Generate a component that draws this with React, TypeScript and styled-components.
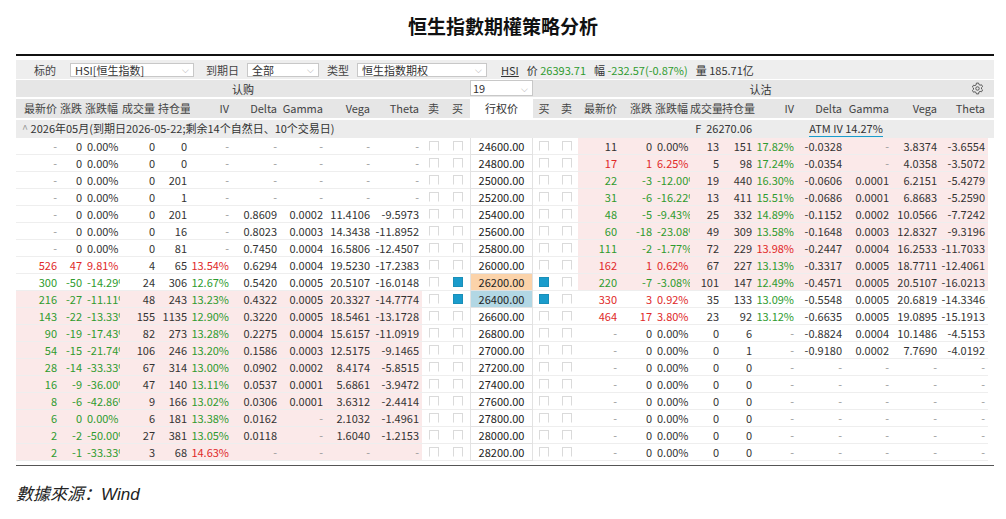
import React from 'react';
import styled, { createGlobalStyle } from 'styled-components';

const Global = createGlobalStyle`
  body { margin: 0; background: #fff; font-family: "Noto Sans CJK SC", "Noto Sans", sans-serif; }
`;

const W = [44, 25, 35, 38, 32, 42, 48, 46, 47, 49, 23, 25, 63, 22, 23, 42, 35, 35, 32, 33, 42, 48, 47, 48, 48];
const COLS = W.map((w) => `${w}px`).join(' ');

const Page = styled.div`
  width: 1006px;
  height: 519px;
  padding: 8px 16px 0;
  box-sizing: border-box;
`;

const Title = styled.h1`
  margin: 0;
  text-align: center;
  font-size: 19px;
  font-weight: 700;
  color: #111;
  height: 46px;
  line-height: 36px;
`;

const Panel = styled.div`
  border-top: 2px solid #111;
  border-bottom: 1px solid #555;
  width: 978px;
  padding: 4px 0 4px;
  font-size: 11px;
  color: #333;
`;

const Toolbar = styled.div`
  display: flex;
  align-items: center;
  gap: 8px;
  height: 19px;
  background: #eeeeee;
  padding-left: 18px;
  margin-bottom: 1px;
`;

const Label = styled.span`
  color: #444;
`;

const Select = styled.div<{ w: number }>`
  width: ${(p) => p.w}px;
  height: 14px;
  background: #fff;
  border: 1px solid #c8c8c8;
  display: flex;
  align-items: center;
  justify-content: space-between;
  padding: 0 4px;
  box-sizing: border-box;
  font-size: 11px;
  &::after { content: '⌵'; color: #aaa; font-size: 9px; }
`;

const Quote = styled.span<{ c?: string }>`
  color: ${(p) => p.c || '#333'};
`;

const Row = styled.div<{ h?: number; bg?: string }>`
  display: grid;
  grid-template-columns: ${COLS};
  height: ${(p) => p.h || 17}px;
  background: ${(p) => p.bg || '#fff'};
  align-items: stretch;
`;

const SideHead = styled.div<{ span: string }>`
  grid-column: ${(p) => p.span};
  background: #e6e6e6;
  display: flex;
  align-items: center;
  justify-content: center;
  position: relative;
`;

const Cell = styled.div<{ c?: string; bg?: string; align?: string }>`
  color: ${(p) => p.c || '#333'};
  background: ${(p) => p.bg || 'transparent'};
  text-align: ${(p) => p.align || 'right'};
  padding: 0 3px 0 0;
  overflow: hidden;
  white-space: nowrap;
  line-height: 17px;
  border-bottom: 1px solid #eee;
`;

const HeadCell = styled.div`
  text-align: right;
  padding-right: 3px;
  background: #e6e6e6;
  color: #444;
  white-space: nowrap;
  overflow: hidden;
  line-height: 17px;
  &.c { text-align: center; padding: 0; }
`;

const Strike = styled.div<{ bg?: string }>`
  background: ${(p) => p.bg || '#fff'};
  border: 1px solid #e2e2e2;
  border-top: none;
  text-align: center;
  line-height: 16px;
  color: #222;
`;

const Box = styled.div<{ on?: boolean }>`
  display: flex;
  align-items: center;
  justify-content: center;
  border-bottom: 1px solid #eee;
  &::before {
    content: '';
    width: ${(p) => (p.on ? 8 : 8)}px;
    height: 8px;
    border: 1px solid ${(p) => (p.on ? '#1a8fb8' : '#dadada')};
    border-bottom-color: ${(p) => (p.on ? '#1a8fb8' : '#fff')};
    background: ${(p) => (p.on ? '#1a9ccc' : '#fff')};
  }
`;

const Footer = styled.div`
  margin-top: 14px;
  font-style: italic;
  font-size: 17px;
  color: #222;
  font-family: "Liberation Sans", "Noto Sans CJK SC", sans-serif;
`;

const G = '#2e9b2e';
const R = '#e02828';
const PINK = '#fbe9e9';

type Side = [string, string, string, string, string, string, string, string, string, string, string, string];
// price, chg, pct, vol, oi, iv, delta, gamma, vega, theta, priceColor, ivColor
const dash = (oi: string): Side => ['-', '0', '0.00%', '0', oi, '-', '-', '-', '-', '-', '', ''];

const calls: Side[] = [
  dash('0'), dash('0'), dash('201'), dash('1'),
  ['-', '0', '0.00%', '0', '201', '-', '0.8609', '0.0002', '11.4106', '-9.5973', '', ''],
  ['-', '0', '0.00%', '0', '16', '-', '0.8023', '0.0003', '14.3438', '-11.8952', '', ''],
  ['-', '0', '0.00%', '0', '81', '-', '0.7450', '0.0004', '16.5806', '-12.4507', '', ''],
  ['526', '47', '9.81%', '4', '65', '13.54%', '0.6294', '0.0004', '19.5230', '-17.2383', R, R],
  ['300', '-50', '-14.29%', '24', '306', '12.67%', '0.5420', '0.0005', '20.5107', '-16.0148', G, G],
  ['216', '-27', '-11.11%', '48', '243', '13.23%', '0.4322', '0.0005', '20.3327', '-14.7774', G, G],
  ['143', '-22', '-13.33%', '155', '1135', '12.90%', '0.3220', '0.0005', '18.5461', '-13.1728', G, G],
  ['90', '-19', '-17.43%', '82', '273', '13.28%', '0.2275', '0.0004', '15.6157', '-11.0919', G, G],
  ['54', '-15', '-21.74%', '106', '246', '13.20%', '0.1586', '0.0003', '12.5175', '-9.1465', G, G],
  ['28', '-14', '-33.33%', '67', '314', '13.00%', '0.0902', '0.0002', '8.4174', '-5.8515', G, G],
  ['16', '-9', '-36.00%', '47', '140', '13.11%', '0.0537', '0.0001', '5.6861', '-3.9472', G, G],
  ['8', '-6', '-42.86%', '9', '166', '13.02%', '0.0306', '0.0001', '3.6312', '-2.4414', G, G],
  ['6', '0', '0.00%', '6', '181', '13.38%', '0.0162', '-', '2.1032', '-1.4961', G, G],
  ['2', '-2', '-50.00%', '27', '381', '13.05%', '0.0118', '-', '1.6040', '-1.2153', G, G],
  ['2', '-1', '-33.33%', '3', '68', '14.63%', '-', '-', '-', '-', G, R],
];

const puts: Side[] = [
  ['11', '0', '0.00%', '13', '151', '17.82%', '-0.0328', '-', '3.8374', '-3.6554', '', G],
  ['17', '1', '6.25%', '5', '98', '17.24%', '-0.0354', '-', '4.0358', '-3.5072', R, G],
  ['22', '-3', '-12.00%', '19', '440', '16.30%', '-0.0606', '0.0001', '6.2151', '-5.4279', G, G],
  ['31', '-6', '-16.22%', '13', '411', '15.51%', '-0.0686', '0.0001', '6.8683', '-5.2590', G, G],
  ['48', '-5', '-9.43%', '25', '332', '14.89%', '-0.1152', '0.0002', '10.0566', '-7.7242', G, G],
  ['60', '-18', '-23.08%', '49', '309', '13.58%', '-0.1648', '0.0003', '12.8327', '-9.3196', G, G],
  ['111', '-2', '-1.77%', '72', '229', '13.98%', '-0.2447', '0.0004', '16.2533', '-11.7033', G, R],
  ['162', '1', '0.62%', '67', '227', '13.13%', '-0.3317', '0.0005', '18.7711', '-12.4061', R, G],
  ['220', '-7', '-3.08%', '101', '147', '12.49%', '-0.4571', '0.0005', '20.5107', '-16.0213', G, G],
  ['330', '3', '0.92%', '35', '133', '13.09%', '-0.5548', '0.0005', '20.6819', '-14.3346', R, G],
  ['464', '17', '3.80%', '23', '92', '13.12%', '-0.6635', '0.0005', '19.0895', '-15.1913', R, G],
  ['-', '0', '0.00%', '0', '6', '-', '-0.8824', '0.0004', '10.1486', '-4.5153', '', ''],
  ['-', '0', '0.00%', '0', '1', '-', '-0.9180', '0.0002', '7.7690', '-4.0192', '', ''],
  dash('0'), dash('0'), dash('0'), dash('0'), dash('0'), dash('0'),
];

const strikes = Array.from({ length: 19 }, (_, i) => 24600 + i * 200);
const HEAD = ['最新价', '涨跌', '涨跌幅', '成交量', '持仓量', 'IV', 'Delta', 'Gamma', 'Vega', 'Theta'];

const sideCells = (d: Side, bg: string | undefined, key: string) => {
  const dim = (v: string) => (v === '-' ? '#999' : undefined);
  const chg = d[10] || undefined;
  return [
    <Cell key={key + 0} bg={bg} c={d[0] === '-' ? '#999' : chg}>{d[0]}</Cell>,
    <Cell key={key + 1} bg={bg} c={chg}>{d[1]}</Cell>,
    <Cell key={key + 2} bg={bg} c={chg} align="left" style={{ paddingLeft: 2 }}>{d[2]}</Cell>,
    <Cell key={key + 3} bg={bg}>{d[3]}</Cell>,
    <Cell key={key + 4} bg={bg}>{d[4]}</Cell>,
    <Cell key={key + 5} bg={bg} c={d[5] === '-' ? '#999' : d[11] || undefined}>{d[5]}</Cell>,
    ...[6, 7, 8, 9].map((j) => (
      <Cell key={key + j} bg={bg} c={dim(d[j])}>{d[j]}</Cell>
    )),
  ];
};

const Gear = () => (
  <svg width="13" height="13" viewBox="0 0 24 24" fill="none" stroke="#555" strokeWidth="1.8" strokeLinejoin="round" style={{ position: 'absolute', right: 4, top: 2 }}>
    <circle cx="12" cy="12" r="3.2" />
    <path d="M10 2h4l.6 2.6 2.2 1.3 2.6-.8 2 3.4-2 1.8v2.6l2 1.8-2 3.4-2.6-.8-2.2 1.3L14 22h-4l-.6-2.6-2.2-1.3-2.6.8-2-3.4 2-1.8v-2.6l-2-1.8 2-3.4 2.6.8 2.2-1.3z" />
  </svg>
);

export default function App() {
  return (
    <Page>
      <Global />
      <Title>恒生指數期權策略分析</Title>
      <Panel>
        <Toolbar>
          <Label>标的</Label>
          <Select w={124} style={{ marginLeft: 6 }}>HSI[恒生指数]</Select>
          <Label style={{ marginLeft: 4 }}>到期日</Label>
          <Select w={72}>全部</Select>
          <Label>类型</Label>
          <Select w={130}>恒生指数期权</Select>
          <Quote style={{ textDecoration: 'underline', marginLeft: 6 }}>HSI</Quote>
          <Quote>价 <Quote c={G}>26393.71</Quote></Quote>
          <Quote>幅 <Quote c={G}>-232.57(-0.87%)</Quote></Quote>
          <Quote>量 185.71亿</Quote>
        </Toolbar>
        <Row bg="#e6e6e6">
          <SideHead span="1 / 13">认购</SideHead>
          <Select w={63} style={{ gridColumn: '13 / 14', height: 16, paddingLeft: 2 }}>19</Select>
          <SideHead span="14 / 26">认沽<Gear /></SideHead>
        </Row>
        <Row bg="#e6e6e6" h={19} style={{ borderTop: '2px solid #fff' }}>
          {HEAD.map((h) => <HeadCell key={'l' + h} style={{ lineHeight: '19px' }}>{h}</HeadCell>)}
          <HeadCell className="c" style={{ lineHeight: '19px' }}>卖</HeadCell>
          <HeadCell className="c" style={{ lineHeight: '19px' }}>买</HeadCell>
          <HeadCell className="c" style={{ lineHeight: '19px', background: '#fff', color: '#333' }}>行权价</HeadCell>
          <HeadCell className="c" style={{ lineHeight: '19px' }}>买</HeadCell>
          <HeadCell className="c" style={{ lineHeight: '19px' }}>卖</HeadCell>
          {HEAD.map((h) => <HeadCell key={'r' + h} style={{ lineHeight: '19px' }}>{h}</HeadCell>)}
        </Row>
        <Row bg="#ececec" h={18} style={{ borderTop: '2px solid #fff' }}>
          <HeadCell style={{ gridColumn: '1 / 13', textAlign: 'left', paddingLeft: 6, background: 'transparent', color: '#333' }}>
            <span style={{ color: '#999' }}>^</span> 2026年05月(到期日2026-05-22;剩余14个自然日、10个交易日)
          </HeadCell>
          <HeadCell style={{ gridColumn: '16 / 21', background: 'transparent', color: '#333' }}>F&nbsp; 26270.06</HeadCell>
          <HeadCell style={{ gridColumn: '21 / 25', background: 'transparent', color: '#333', textAlign: 'center' }}>
            <span style={{ borderBottom: '1px solid #1a9ccc' }}>ATM IV 14.27%</span>
          </HeadCell>
        </Row>
        {strikes.map((s, i) => {
          const sel = s === 26200 || s === 26400;
          return (
            <Row key={s}>
              {sideCells(calls[i], s >= 26400 ? PINK : undefined, 'c')}
              <Box />
              <Box on={sel} />
              <Strike bg={s === 26200 ? '#fbd3aa' : s === 26400 ? '#b2d7e4' : undefined}>{s}.00</Strike>
              <Box on={sel} />
              <Box />
              {sideCells(puts[i], s <= 26200 ? PINK : undefined, 'p')}
            </Row>
          );
        })}
      </Panel>
      <Footer>數據來源：Wind</Footer>
    </Page>
  );
}
